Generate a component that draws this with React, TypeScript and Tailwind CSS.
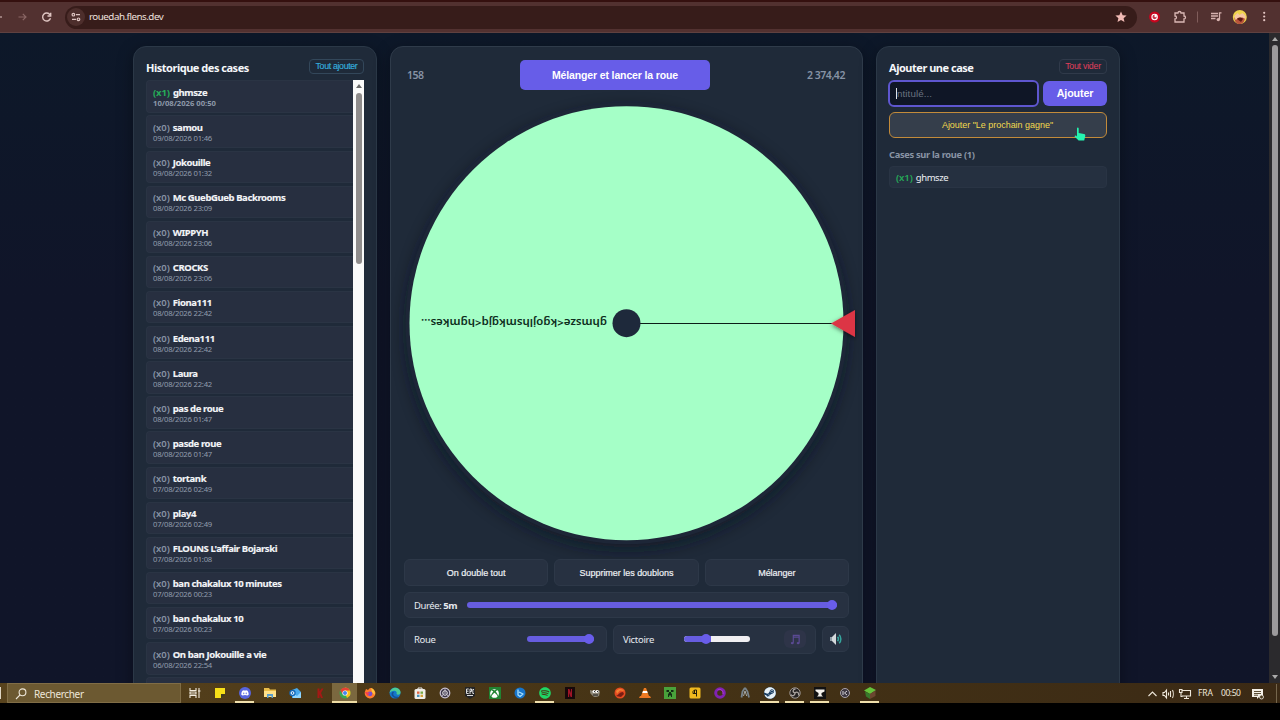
import type { ReactNode } from "react";
import { FaDiscord, FaSteam, FaXbox, FaSpotify } from "react-icons/fa";

const HISTORY: { count: number; name: string; date: string }[] = [
  { count: 1, name: "ghmsze", date: "10/08/2026 00:50" },
  { count: 0, name: "samou", date: "09/08/2026 01:46" },
  { count: 0, name: "Jokouille", date: "09/08/2026 01:32" },
  { count: 0, name: "Mc GuebGueb Backrooms", date: "08/08/2026 23:09" },
  { count: 0, name: "WIPPYH", date: "08/08/2026 23:06" },
  { count: 0, name: "CROCKS", date: "08/08/2026 23:06" },
  { count: 0, name: "Fiona111", date: "08/08/2026 22:42" },
  { count: 0, name: "Edena111", date: "08/08/2026 22:42" },
  { count: 0, name: "Laura", date: "08/08/2026 22:42" },
  { count: 0, name: "pas de roue", date: "08/08/2026 01:47" },
  { count: 0, name: "pasde roue", date: "08/08/2026 01:47" },
  { count: 0, name: "tortank", date: "07/08/2026 02:49" },
  { count: 0, name: "play4", date: "07/08/2026 02:49" },
  { count: 0, name: "FLOUNS L'affair Bojarski", date: "07/08/2026 01:08" },
  { count: 0, name: "ban chakalux 10 minutes", date: "07/08/2026 00:23" },
  { count: 0, name: "ban chakalux 10", date: "07/08/2026 00:23" },
  { count: 0, name: "On ban Jokouille a vie", date: "06/08/2026 22:54" },
];

function BrowserBar() {
  return (
    <header className="flex h-[33px] shrink-0 items-center border-b border-[#5f4140] border-t-2 border-t-[#35100f] bg-[#523130] text-[#dfc5c2]">
      <svg className="h-[14px] w-[65px] shrink-0" viewBox="0 0 65 14" fill="none" stroke="currentColor" strokeWidth="1.2">
        <path d="M-3 7h5" />
        <path d="M18.500 7h7.500M22.800 3.800L26 7l-3.200 3.200" stroke="#8a6765" />
        <path d="M50 4.800A4 4 0 1 0 50.500 8.200M50.700 2.800v3.200h-3.200" strokeWidth="1.400" />
      </svg>
      <div className="flex h-[23px] w-[1072px] items-center rounded-full bg-[#371c1a] pl-[2px] pr-[10px]">
        <span className="flex size-[18px] items-center justify-center rounded-full bg-[#4d2e2c]">
          <svg className="size-[10px]" viewBox="0 0 10 10" fill="none" stroke="currentColor" strokeWidth="1.200">
            <circle cx="2.400" cy="2.700" r="1.300" />
            <path d="M5 2.700h4M1 7.300h4" />
            <circle cx="7.500" cy="7.300" r="1.300" />
          </svg>
        </span>
        <span className="ml-[4px] flex-1 text-[9.800px] leading-none tracking-[-0.500px] text-[#eee0df]">rouedah.flens.dev</span>
        <svg className="size-[12px]" viewBox="0 0 24 24" fill="#f0b9b4">
          <path d="M12 1l3.300 7.300 7.900.8-6 5.300 1.800 7.800L12 18.100l-7 4.100 1.800-7.800-6-5.300 7.900-.8z" />
        </svg>
      </div>
      <svg className="h-[16px] w-[140px] shrink-0" viewBox="1137 9 140 16" fill="none">
        <circle cx="1154.600" cy="17" r="5.500" fill="#c8051e" />
        <circle cx="1154.600" cy="17" r="2.700" fill="#c8354a" stroke="#fff" strokeWidth="1.100" />
        <circle cx="1155.600" cy="16" r="1.200" fill="#fff" />
        <path d="M1175 13h3c0-2 3-2 3 0h3v3c2 0 2 3 0 3v3h-9v-3c2 0 2-3 0-3z" stroke="#dab8b5" strokeWidth="1.300" />
        <path d="M1197.500 11.500v11" stroke="#805d5b" />
        <path d="M1211 13.500h7M1211 16h7M1211 18.500h4.500M1219.500 19.500V12.800h2" stroke="#d7b2af" strokeWidth="1.300" />
        <circle cx="1218.300" cy="19.600" r="1.700" fill="#d7b2af" />
        <circle cx="1239.800" cy="17" r="7" fill="#efd34d" />
        <path d="M1234.500 18c1-3 9-4 10.500 0-.5 4.500-3 6-5.500 6s-5-2-5-6z" fill="#b9543c" />
        <path d="M1234.500 16l3-3 2 2 3-2 3 3v3l-3-1.500-4 .5-3 2z" fill="#f6c7a4" />
        <path d="M1237 19c1-2 5-2 6 0l-2 3z" fill="#5b1814" />
        <g fill="#e2c4c1">
          <circle cx="1264.200" cy="12.800" r="1.100" />
          <circle cx="1264.200" cy="16.500" r="1.100" />
          <circle cx="1264.200" cy="20.200" r="1.100" />
        </g>
      </svg>
    </header>
  );
}

function HistoryPanel() {
  return (
    <section className="flex h-[660px] w-[244px] shrink-0 flex-col rounded-[13px] border border-[#2b3847] bg-[#1f2a39] px-[12px] pt-[12px] shadow-[0_4px_16px_rgba(0,0,0,0.35)]">
      <div className="flex h-[16px] shrink-0 items-center justify-between">
        <h2 className="whitespace-nowrap text-[11px] font-bold leading-none tracking-[-0.480px] text-[#f5f7fa]">Historique des cases</h2>
        <button className="mt-[-1px] h-[15px] w-[55px] whitespace-nowrap rounded-[4px] border border-[#33475a] font-['Liberation_Sans',sans-serif] text-[8.800px] leading-none tracking-[-0.340px] text-[#35aede] [-webkit-text-stroke:0.15px_#35aede]">Tout ajouter</button>
      </div>
      <div className="mt-[5.300px] flex h-[640px] w-[218px] shrink-0">
        <ul className="w-[207px] shrink-0">
          {HISTORY.map((item) => (
            <li key={item.name} className="mb-[2.600px] h-[32.530px] rounded-l-[4px] border-y border-l border-[#2a3444] bg-[#272f40] pl-[6px] pt-[5.500px]">
              <p className="flex gap-[3px] whitespace-nowrap text-[9.500px] font-bold leading-[12px] tracking-[-0.400px] text-[#f3f5f8] [-webkit-text-stroke:0.15px_#f3f5f8]">
                <span className={item.count ? "tracking-[-0.1px] text-[#25ad58] [-webkit-text-stroke:0px]" : "font-semibold tracking-[-0.05px] text-[#8793a5] [-webkit-text-stroke:0px]"}>(x{item.count})</span>
                <span>{item.name}</span>
              </p>
              <p className={item.count ? "whitespace-nowrap text-[7.700px] font-bold leading-[9.500px] tracking-[-0.020px] text-[#8d98a9]" : "whitespace-nowrap text-[7.700px] leading-[9.500px] tracking-[-0.220px] text-[#929dad]"}>{item.date}</p>
            </li>
          ))}
          <li className="h-[32px] rounded-tl-[4px] border-l border-t border-[#2a3444] bg-[#272f40]" />
        </ul>
        <div className="flex w-[11px] flex-col items-center bg-[#fafafa]">
          <svg className="mt-[4px] h-[4px] w-[6px] shrink-0" viewBox="0 0 6 4" fill="#6b6b6b"><path d="M3 0l3 4H0z" /></svg>
          <div className="mt-[5px] h-[171px] w-[6px] rounded-full bg-[#8f8c8c]" />
        </div>
      </div>
    </section>
  );
}

function Wheel() {
  return (
    <svg className="mt-[3px] h-[459px] w-[471px] shrink-0 self-center overflow-visible" viewBox="391 94 471 459">
      <defs>
        <filter id="wheelShadow" x="-20%" y="-20%" width="140%" height="140%">
          <feGaussianBlur stdDeviation="9" />
        </filter>
        <filter id="pinShadow" x="-50%" y="-50%" width="200%" height="200%">
          <feDropShadow dx="0" dy="1.500" stdDeviation="2" floodColor="#000" floodOpacity="0.5" />
        </filter>
      </defs>
      <circle cx="626.500" cy="329" r="218" fill="#0b1220" opacity="0.8" filter="url(#wheelShadow)" />
      <circle cx="626.500" cy="323.200" r="221" fill="#1d2637" />
      <circle cx="626.500" cy="323.200" r="217" fill="#a5ffc7" />
      <path d="M626 323.500h207" stroke="#0c1d17" strokeWidth="1.200" />
      <circle cx="626.500" cy="323.200" r="14" fill="#1e293b" />
      <text
        transform="translate(607 318.600) rotate(180)"
        textLength="186"
        lengthAdjust="spacingAndGlyphs"
        fill="#0e2e1d"
        className="text-[11.500px] font-semibold"
      >
        {"ghmsze<kgojlhsmkgjq<hgmkes…"}
      </text>
      <path d="M831 323.500l24-13.500v27z" fill="#dc3545" filter="url(#pinShadow)" />
    </svg>
  );
}

function ActionButton({ children }: { children: ReactNode }) {
  return (
    <button className="h-[27px] flex-1 whitespace-nowrap rounded-[6px] border border-[#2d3848] bg-[#273141] pt-px font-['Liberation_Sans',sans-serif] text-[9px] leading-none tracking-[-0.030px] text-[#edf0f4] [-webkit-text-stroke:0.2px_#edf0f4]">
      {children}
    </button>
  );
}

function WheelPanel() {
  return (
    <section className="flex h-[660px] w-[473px] shrink-0 flex-col rounded-[13px] border border-[#2f3b4a] bg-[#1f2a39] px-[13px] pt-[13px] shadow-[0_4px_16px_rgba(0,0,0,0.35)]">
      <div className="flex h-[31px] shrink-0 items-center px-[3px] text-[10.500px] font-semibold text-[#8793a5]">
        <span className="w-[113px] pt-px tracking-[-0.5px]">158</span>
        <button className="h-[30px] w-[190px] self-start rounded-[5px] bg-[#675de8] pt-px font-['Liberation_Sans',sans-serif] text-[10.500px] font-bold tracking-[-0.130px] text-white">Mélanger et lancer la roue</button>
        <span className="flex-1 whitespace-nowrap pr-px pt-px text-right tracking-[-0.450px]">2 374,42</span>
      </div>
      <Wheel />
      <div className="mt-[6px] flex shrink-0 gap-[6px]">
        <ActionButton>On double tout</ActionButton>
        <ActionButton>Supprimer les doublons</ActionButton>
        <ActionButton>Mélanger</ActionButton>
      </div>
      <div className="mt-[6px] flex h-[26px] shrink-0 items-center rounded-[6px] border border-[#2d3848] bg-[#273141] pl-[9px] text-[9.500px] text-[#e6eaf0]">
        <span className="w-[53px] whitespace-nowrap pt-[2px] tracking-[-0.420px]">Durée: <b>5m</b></span>
        <span className="flex h-[6px] w-[370px] items-center justify-end rounded-full bg-[#675de0]"><i className="size-[10px] rounded-full bg-[#695dea]" /></span>
      </div>
      <div className="mt-[6px] flex h-[30px] shrink-0 items-center gap-[6px] text-[9.500px] text-[#e6eaf0]">
        <div className="flex h-[26px] w-[203px] items-center justify-between rounded-[6px] border border-[#2d3848] bg-[#273141] pl-[9px] pr-[12px]">
          <span className="pt-[2px] tracking-[-0.350px]">Roue</span>
          <span className="flex h-[6px] w-[67px] items-center justify-end rounded-full bg-[#675de0]"><i className="size-[10px] rounded-full bg-[#695dea]" /></span>
        </div>
        <div className="flex h-[29px] w-[203px] items-center rounded-[6px] border border-[#2d3848] bg-[#273141] pl-[9px]">
          <span className="w-[61px] pt-[2px] tracking-[-0.300px]">Victoire</span>
          <span className="flex h-[6px] w-[66px] items-center overflow-visible rounded-full bg-[#f0eff2]">
            <span className="flex h-[6px] w-[27px] items-center justify-end rounded-l-full bg-[#675de0]"><i className="size-[10px] shrink-0 rounded-full bg-[#695dea]" /></span>
          </span>
          <span className="ml-[34px] flex h-[18px] w-[22px] items-center justify-center rounded-[6px] bg-[#2e3448]">
            <svg className="size-[11px]" viewBox="0 0 12 12" fill="none" stroke="#5b4a94" strokeWidth="1.300">
              <path d="M3.600 9.500V1.500h6.400v8M3.600 3.500h6.400" />
              <ellipse cx="2.500" cy="9.900" rx="1.600" ry="1.300" fill="#5b4a94" stroke="none" />
              <ellipse cx="8.900" cy="9.900" rx="1.600" ry="1.300" fill="#5b4a94" stroke="none" />
            </svg>
          </span>
        </div>
        <button className="flex h-[26px] flex-1 items-center justify-center rounded-[6px] border border-[#2d3848] bg-[#273141]">
          <svg className="size-[14px]" viewBox="0 0 14 14" fill="none">
            <path d="M1 5h2v4H1z" fill="#8f9ba5" />
            <path d="M3 5l4-4v12L3 9z" fill="#d3d8db" />
            <path d="M8.600 4.800c1 1.200 1 3.200 0 4.400M10.200 2.800c2.200 2.200 2.200 6.200 0 8.400" stroke="#36a69e" strokeWidth="1.500" />
          </svg>
        </button>
      </div>
    </section>
  );
}

function AddPanel() {
  return (
    <section className="flex h-[660px] w-[244px] shrink-0 flex-col rounded-[13px] border border-[#2b3847] bg-[#1f2a39] px-[12px] pt-[12px] shadow-[0_4px_16px_rgba(0,0,0,0.35)]">
      <div className="flex h-[16px] shrink-0 items-center justify-between">
        <h2 className="whitespace-nowrap text-[11px] font-bold leading-none tracking-[-0.480px] text-[#f5f7fa]">Ajouter une case</h2>
        <button className="mt-[-1px] h-[15px] w-[48px] whitespace-nowrap rounded-[4px] border border-[#303a4a] font-['Liberation_Sans',sans-serif] text-[8.800px] leading-none tracking-[-0.240px] text-[#e03f5b]">Tout vider</button>
      </div>
      <div className="mt-[5px] flex h-[27px] shrink-0 items-center justify-between">
        <div className="ml-[-1px] flex h-[27px] w-[151px] items-center rounded-[6px] border-2 border-[#5e56cf] bg-[#0f1626] pl-[6px]">
          <i className="h-[11px] w-px bg-[#dfe3e8]" />
          <span className="pt-px font-['Liberation_Sans',sans-serif] text-[9.800px] tracking-[0.080px] text-[#697280]">ntitulé...</span>
        </div>
        <button className="h-[25px] w-[64px] rounded-[6px] bg-[#675de8] font-['Liberation_Sans',sans-serif] text-[10.700px] font-bold leading-none tracking-[-0.100px] text-white">Ajouter</button>
      </div>
      <button className="relative mt-[5px] h-[26px] shrink-0 rounded-[6px] border border-[#c38b3a] bg-[#353e4b] pr-px font-['Liberation_Sans',sans-serif] text-[9px] leading-none tracking-[-0.030px] text-[#f2d94e]">
        Ajouter "Le prochain gagne"
        <svg className="absolute right-[20px] top-[14px] h-[15px] w-[12px]" viewBox="0 0 12 15" fill="#25f5b0">
          <path d="M3 1.500c0-1.200 1.600-1.200 1.700 0V6l5.300 1c1.200.3 1.500 1 1.200 2.200l-1 4.300H4.600L.8 9.800C.2 9 1.200 8 2 8.600l1 .8z" />
        </svg>
      </button>
      <h3 className="mt-[10px] text-[9.300px] font-bold leading-[13px] tracking-[-0.320px] text-[#8994a5]">Cases sur la roue (1)</h3>
      <div className="mt-[5px] flex h-[22px] shrink-0 items-center rounded-[4px] border border-[#293444] bg-[#253040] pl-[6px] pt-px text-[9.500px] leading-none tracking-[-0.400px] text-[#eef1f5]">
        <span className="mr-[3px] font-semibold tracking-[-0.050px] text-[#25a958]">(x1)</span>ghmsze
      </div>
    </section>
  );
}

function Task({ children, open, active }: { children: ReactNode; open?: boolean; active?: boolean }) {
  return (
    <span className={active ? "flex h-[20px] w-[25px] items-center justify-center border-b-2 border-[#eedca4] bg-[#7b683f] pt-[2px]" : "flex h-[20px] w-[25px] flex-col items-center justify-center"}>
      <span className={active ? "flex items-center" : "flex h-[18px] items-center pt-[2px]"}>{children}</span>
      {!active && <i className={open ? "h-[2px] w-[19px] bg-[#f0dfac]" : "h-[2px] w-[19px]"} />}
    </span>
  );
}

function Glyph({ children }: { children: ReactNode }) {
  return <svg className="size-[12px]" viewBox="0 0 12 12" fill="none">{children}</svg>;
}

function Taskbar() {
  return (
    <footer className="flex h-[20px] shrink-0 items-center bg-linear-to-r from-[#58431d] via-[#453315] to-[#3b2a15] text-[#eee7da]">
      <i className="h-[12px] w-px bg-[#ded5c3]" />
      <div className="ml-[6px] flex h-[20px] w-[174px] items-center border border-[#806d46] bg-[#6c5931] pl-[7px]">
        <svg className="mt-px size-[12px]" viewBox="0 0 12 12" fill="none" stroke="currentColor" strokeWidth="1.100">
          <circle cx="7.500" cy="4.300" r="3.400" />
          <path d="M5 6.900L1 11" />
        </svg>
        <span className="ml-[7px] mt-px text-[10px] leading-none tracking-[-0.350px]">Rechercher</span>
      </div>
      <nav className="flex flex-1 pl-px">
        <Task><Glyph><path d="M1 1v2.500h6V1M1 11V8.500h6V11M1 5h6v2H1zM10 1v10M9 4h2.500" stroke="#f2ecdf" strokeWidth="1.100" /></Glyph></Task>
        <Task><Glyph><path d="M1 1h10v6L7.500 11H1z" fill="#f7df18" /><path d="M7 7h4v1l-3 3H7z" fill="#423c1f" /></Glyph></Task>
        <Task open><span className="flex size-[12px] items-center justify-center rounded-full bg-[#5865dd] text-[8px] text-white"><FaDiscord /></span></Task>
        <Task><Glyph><path d="M0 1h5l1 1.500h6V10H0z" fill="#e9bd49" /><path d="M0 4h12v6H0z" fill="#ffe18a" /><path d="M3 11V7h6v4H7.500V9h-3v2z" fill="#599dcc" /></Glyph></Task>
        <Task><Glyph><path d="M3 3l5-2 4 4v6H3z" fill="#49a9ec" /><path d="M4 6l4 3 4-4v6H4z" fill="#8fd5ff" /><circle cx="3.500" cy="6" r="3.200" fill="#1268b9" /><circle cx="3.500" cy="6" r="1.400" stroke="#fff" /></Glyph></Task>
        <Task><Glyph><path d="M3.500 1.500h2v3l2-3h2L7 6l2 5H7L5.500 7.500V11h-2z" fill="#a41915" /></Glyph></Task>
        <Task active><Glyph><circle cx="6" cy="6" r="5.500" fill="#36a852" /><path d="M6 6V.5a5.500 5.500 0 0 1 4.800 8.200L8 11z" fill="#fbc017" /><path d="M1.200 3.300A5.500 5.500 0 0 1 11 3.500H6L3.500 7z" fill="#e64134" /><circle cx="6" cy="6" r="2.600" fill="#fff" /><circle cx="6" cy="6" r="2" fill="#4385ef" /></Glyph></Task>
        <Task><Glyph><path d="M2 2l2 1 2-2c3 0 5 2 5.500 5A5.400 5.400 0 1 1 .8 5z" fill="#ff7c2e" /><path d="M7 1c3 1 4.500 4 3.500 7L8 5z" fill="#ffc73b" /><circle cx="6" cy="6.800" r="2.400" fill="#7651cc" /><path d="M1 5c2 0 3 1 5 .5L3.500 9z" fill="#f33d51" /></Glyph></Task>
        <Task><Glyph><circle cx="6" cy="6" r="5.500" fill="#1477c9" /><path d="M.6 6C1 2.500 4 .5 7 .7c3 .3 5 3 4.500 5.300C11 8 8.500 8 7.500 7 9 4 4 2 .6 6z" fill="#4bcb96" /><path d="M4.500 5C2 7 4 11 9 10.500" stroke="#164f94" strokeWidth="1.500" /></Glyph></Task>
        <Task><Glyph><path d="M4 3V1h4v2" stroke="#eee" /><rect x="0.500" y="2" width="11" height="10" rx="1.500" fill="#f0eee8" /><path d="M3 4.500h2.500v2.300H3z" fill="#e26543" /><path d="M6.500 4.500H9v2.300H6.500z" fill="#77a944" /><path d="M3 7.700h2.500V10H3z" fill="#4592bd" /><path d="M6.500 7.700H9V10H6.500z" fill="#d5a239" /></Glyph></Task>
        <Task><Glyph><circle cx="6" cy="6" r="4.800" stroke="#c8c2d2" strokeWidth="1.200" fill="#3a3347" /><circle cx="6" cy="6" r="2.300" stroke="#eee" /><path d="M6 1.500v4L3 9M6 5.500L9 9" stroke="#c8c2d2" strokeWidth="0.800" /></Glyph></Task>
        <Task><Glyph><path d="M1 0h10v9l-5 3-5-3z" fill="#252525" /><path d="M4.700 2H2.500v4.500h2.200M2.500 4.200h2M6 7V2h1.500v2.500H6M10 2.500H8.800v4H10M3 8.500h6" stroke="#eee" strokeWidth="0.900" /></Glyph></Task>
        <Task><span className="flex size-[12px] items-center justify-center bg-[#218332] text-[9px] text-white"><FaXbox /></span></Task>
        <Task><Glyph><circle cx="6" cy="6" r="5.500" fill="#1775cb" /><path d="M4 2.500v5.500l2 1.500 3-2.500L5 5" stroke="#a9e2ff" strokeWidth="1.300" strokeLinejoin="round" /></Glyph></Task>
        <Task open><span className="text-[12px] text-[#20d665]"><FaSpotify /></span></Task>
        <Task><Glyph><path d="M1 0h10v12H1z" fill="#17090a" /><path d="M4 2h1.400l1.500 4V2H8v8H6.600L5.200 6v4H4z" fill="#a01426" /></Glyph></Task>
        <Task><Glyph><path d="M1 3c2 1 7 1 9 0l1 2-1 4c-3 2-6 1-7-1C1 7 1 5 1 3z" fill="#8d8676" /><circle cx="5" cy="4.600" r="1.500" fill="#fff" /><circle cx="8" cy="4.600" r="1.500" fill="#fff" /><path d="M5 4.600h1M8 4.600h1M4 8h5" stroke="#1c1c1c" /></Glyph></Task>
        <Task><Glyph><circle cx="6" cy="6" r="5.500" fill="#e54b21" /><path d="M2 9c3-1 3-4 7-4l1 2-3 3z" fill="#791d13" /><path d="M2 4c3-3 7-2 8 0L6 3.500 3 7z" fill="#f48133" /></Glyph></Task>
        <Task><Glyph><path d="M5 1h2l3 8H2z" fill="#ee7b22" /><path d="M4 4h4l.7 2H3.300z" fill="#fff" /><path d="M1 9h10l1 2H0z" fill="#eb7622" /></Glyph></Task>
        <Task><Glyph><path d="M0 0h12v12H0z" fill="#49a23b" /><path d="M2.500 3H5v2H2.500zM7 3h2.500v2H7zM5 5h2v1.500h1V10H7V8.500H5V10H4V6.500h1z" fill="#122d14" /></Glyph></Task>
        <Task><Glyph><rect x="0.500" y="0.500" width="11" height="11" rx="1.500" fill="#f0b91e" /><path d="M4 6.500V4.500L5.500 3h2v6.500M4 6.500h4M5.500 3v3" stroke="#241d09" strokeWidth="1" /></Glyph></Task>
        <Task><Glyph><circle cx="6" cy="6" r="4.300" stroke="#8022b1" strokeWidth="3" /><path d="M3.500 3c3-2 6 1 5.500 4" stroke="#b43cd6" /></Glyph></Task>
        <Task><Glyph><path d="M2.500 10.500l1-6 2-3h1l2 3 1.500 6" stroke="#77838c" strokeWidth="1.800" /><path d="M4.500 9L6 4l1.700 5" stroke="#bdc5c9" strokeWidth="0.800" /></Glyph></Task>
        <Task open><span className="rounded-full bg-[#173c61] text-[12px] text-[#e8f2f8]"><FaSteam /></span></Task>
        <Task open><Glyph><circle cx="6" cy="6" r="5.200" fill="#262323" stroke="#aaa4a0" strokeWidth="0.900" /><path d="M6 6c-3-1-2-4 .5-4M6 6c2-2 4.500 0 3.500 2.500M6 6c0 3-3 3.500-4 1.500" stroke="#aaa4a0" strokeWidth="1.300" /></Glyph></Task>
        <Task open><Glyph><path d="M0 0h12v12H0z" fill="#111" /><path d="M1.500 2.500h9v2L7.500 6v2L9 9.500H3L4.500 8V6L1.500 4z" fill="#f4f1ec" /></Glyph></Task>
        <Task><Glyph><circle cx="6" cy="6" r="4.500" fill="#3b3540" stroke="#a9a3ac" /><path d="M4 4v4M8 4L5.500 6 8 8" stroke="#d8d5dc" /></Glyph></Task>
        <Task open><Glyph><path d="M0 3.500L6 0l6 3-6 4z" fill="#65c33c" /><path d="M1 4.500L6 7v5L2 9.500z" fill="#38782b" /><path d="M6 7l5.500-3.500V9L6 12z" fill="#6b4730" /></Glyph></Task>
      </nav>
      <div className="flex w-[133px] shrink-0 items-center pt-px text-[8.500px] leading-none">
        <svg className="h-[12px] w-[45px] shrink-0" viewBox="0 0 45 12" fill="none" stroke="currentColor" strokeWidth="1.100">
          <path d="M1.500 8l4-4 4 4" />
          <path d="M16 4.500h1.500L19.500 2v8l-2-2.500H16zM21.500 4.500v3M23.500 3v6M25.500 2c1 2 1 6 0 8" />
          <path d="M35 2.500h8.500V8H35M37 10.500h5M39.500 8v2.500M32.500 1.500h2.500v3h-2.500zM34 4.500v4h1.500" />
        </svg>
        <span className="ml-[6px] w-[23px] tracking-[-0.1px]">FRA</span>
        <span className="w-[31px] tracking-[-0.450px]">00:50</span>
        <svg className="h-[12px] w-[12px] shrink-0" viewBox="0 0 12 12" fill="none">
          <path d="M0 1h11v8H7l-2 2V9H0z" fill="#f4f0e8" />
          <path d="M2 3.500h7M2 5.500h7M2 7.200h4" stroke="#4b3b20" strokeWidth="0.900" />
          <circle cx="9.500" cy="9" r="2" fill="#4b3b20" stroke="#f4f0e8" strokeWidth="0.800" />
        </svg>
        <i className="ml-[12px] h-[19px] w-px bg-[#75664c]" />
      </div>
    </footer>
  );
}

export default function App() {
  return (
    <div className="flex h-[720px] w-[1280px] flex-col overflow-hidden bg-black font-['Noto_Sans','Open_Sans',sans-serif]">
      <BrowserBar />
      <div className="flex h-[650px] shrink-0 overflow-hidden bg-[#0e1527]">
        <main className="flex flex-1 gap-[13px] overflow-hidden bg-linear-to-b from-[#0d1829] to-[#101529] to-40% pl-[133px] pt-[13px]">
          <HistoryPanel />
          <WheelPanel />
          <AddPanel />
        </main>
        <div className="flex w-[11px] shrink-0 flex-col items-center bg-[#2b2a2d]">
          <svg className="mt-[4px] h-[4px] w-[6px] shrink-0" viewBox="0 0 6 4" fill="#aaa"><path d="M3 0l3 4H0z" /></svg>
          <div className="mt-[4px] h-[591px] w-[6px] shrink-0 rounded-full bg-[#9c9a9c]" />
          <svg className="mt-[39px] h-[4px] w-[6px] shrink-0" viewBox="0 0 6 4" fill="#aaa"><path d="M0 0h6L3 4z" /></svg>
        </div>
      </div>
      <Taskbar />
    </div>
  );
}
